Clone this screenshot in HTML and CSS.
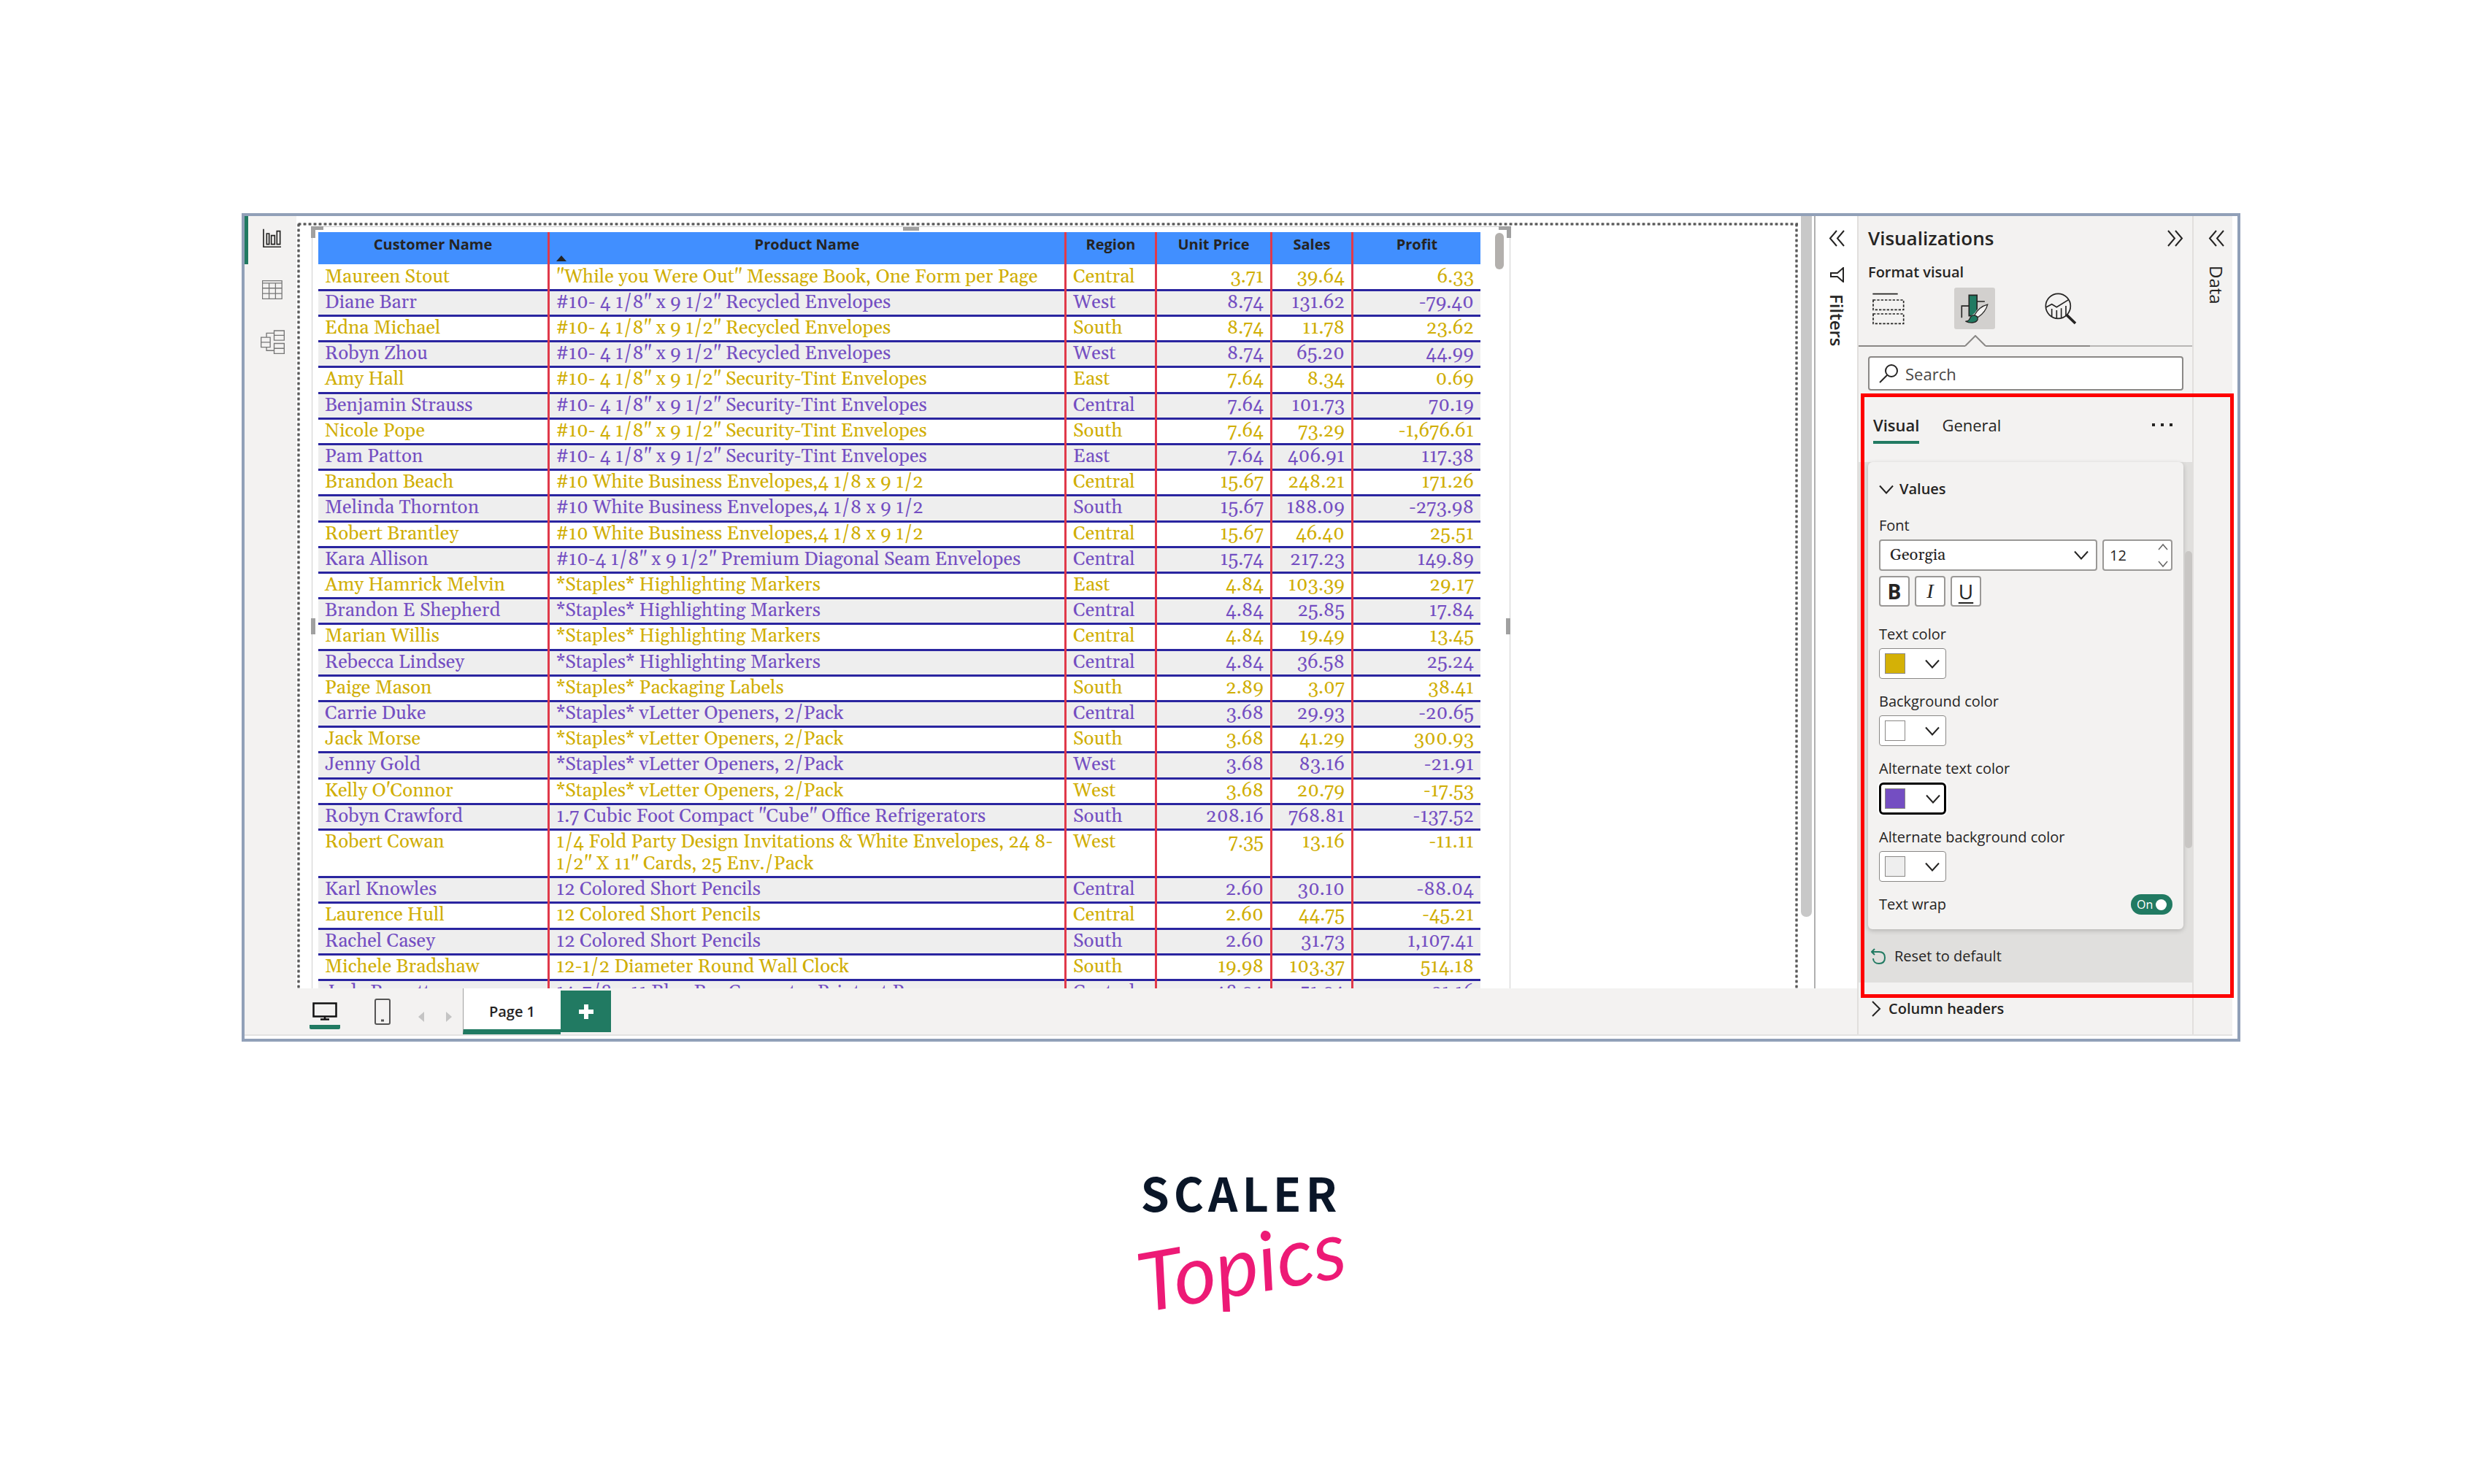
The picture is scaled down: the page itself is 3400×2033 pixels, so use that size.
FILE: index.html
```html
<!DOCTYPE html>
<html lang="en">
<head>
<meta charset="utf-8">
<title>Table visual formatting</title>
<link rel="stylesheet" href="styles.css">
</head>
<body>
<svg class="defs" aria-hidden="true">
  <symbol id="chev-down" viewBox="0 0 20 13"><path d="M1 1.500l9 10 9-10" fill="none" stroke="#252423" stroke-width="2"/></symbol>
  <symbol id="dbl-left" viewBox="0 0 22 23"><path d="M11 1L2 11.500 11 22M21 1l-9 10.500L21 22" fill="none" stroke="#252423" stroke-width="2"/></symbol>
</svg>
<main class="frame">
  <div class="workspace">
    <div class="editor">
      <nav class="views" aria-label="Views">
        <button class="view active" aria-label="Report view"><svg width="26" height="26" viewBox="72 69 78 78"><path d="M75 71v74h72M88 90h10v44H88zM107 98h14v36h-14zM130 80h13v54h-13z" fill="none" stroke="#252423" stroke-width="5"/></svg></button>
        <button class="view" aria-label="Table view"><svg width="28" height="26" viewBox="69 281 85 80"><path d="M70 283h82v76H70zM70 293h82M70 314h82M70 337h82M98 293v66M125 293v66" fill="none" stroke="#777" stroke-width="4"/></svg></button>
        <button class="view" aria-label="Model view"><svg width="33" height="33" viewBox="64 487 98 98"><path d="M119 490h41v39h-41zM119 509h41M66 517h37v40H66zM66 537h37M119 542h41v41h-41zM119 562h41M88 517v-17h31M88 557v14h31" fill="none" stroke="#777" stroke-width="4"/></svg></button>
      </nav>
      <section class="canvas">
        <div class="page">
          <div class="visual">
            <i class="grip tl"></i><i class="grip tc"></i><i class="grip tr"></i><i class="grip ml"></i><i class="grip mr"></i>
            <table>
              <colgroup><col class="c-name"><col class="c-product"><col class="c-region"><col class="c-price"><col class="c-sales"><col class="c-profit"></colgroup>
              <thead><tr><th>Customer Name</th><th class="sorted">Product Name</th><th>Region</th><th>Unit Price</th><th>Sales</th><th>Profit</th></tr></thead>
              <tbody>
                <tr><td>Maureen Stout</td><td>"While you Were Out" Message Book, One Form per Page</td><td>Central</td><td>3.71</td><td>39.64</td><td>6.33</td></tr>
                <tr><td>Diane Barr</td><td>#10- 4 1/8" x 9 1/2" Recycled Envelopes</td><td>West</td><td>8.74</td><td>131.62</td><td>-79.40</td></tr>
                <tr><td>Edna Michael</td><td>#10- 4 1/8" x 9 1/2" Recycled Envelopes</td><td>South</td><td>8.74</td><td>11.78</td><td>23.62</td></tr>
                <tr><td>Robyn Zhou</td><td>#10- 4 1/8" x 9 1/2" Recycled Envelopes</td><td>West</td><td>8.74</td><td>65.20</td><td>44.99</td></tr>
                <tr><td>Amy Hall</td><td>#10- 4 1/8" x 9 1/2" Security-Tint Envelopes</td><td>East</td><td>7.64</td><td>8.34</td><td>0.69</td></tr>
                <tr><td>Benjamin Strauss</td><td>#10- 4 1/8" x 9 1/2" Security-Tint Envelopes</td><td>Central</td><td>7.64</td><td>101.73</td><td>70.19</td></tr>
                <tr><td>Nicole Pope</td><td>#10- 4 1/8" x 9 1/2" Security-Tint Envelopes</td><td>South</td><td>7.64</td><td>73.29</td><td>-1,676.61</td></tr>
                <tr><td>Pam Patton</td><td>#10- 4 1/8" x 9 1/2" Security-Tint Envelopes</td><td>East</td><td>7.64</td><td>406.91</td><td>117.38</td></tr>
                <tr><td>Brandon Beach</td><td>#10 White Business Envelopes,4 1/8 x 9 1/2</td><td>Central</td><td>15.67</td><td>248.21</td><td>171.26</td></tr>
                <tr><td>Melinda Thornton</td><td>#10 White Business Envelopes,4 1/8 x 9 1/2</td><td>South</td><td>15.67</td><td>188.09</td><td>-273.98</td></tr>
                <tr><td>Robert Brantley</td><td>#10 White Business Envelopes,4 1/8 x 9 1/2</td><td>Central</td><td>15.67</td><td>46.40</td><td>25.51</td></tr>
                <tr><td>Kara Allison</td><td>#10-4 1/8" x 9 1/2" Premium Diagonal Seam Envelopes</td><td>Central</td><td>15.74</td><td>217.23</td><td>149.89</td></tr>
                <tr><td>Amy Hamrick Melvin</td><td>*Staples* Highlighting Markers</td><td>East</td><td>4.84</td><td>103.39</td><td>29.17</td></tr>
                <tr><td>Brandon E Shepherd</td><td>*Staples* Highlighting Markers</td><td>Central</td><td>4.84</td><td>25.85</td><td>17.84</td></tr>
                <tr><td>Marian Willis</td><td>*Staples* Highlighting Markers</td><td>Central</td><td>4.84</td><td>19.49</td><td>13.45</td></tr>
                <tr><td>Rebecca Lindsey</td><td>*Staples* Highlighting Markers</td><td>Central</td><td>4.84</td><td>36.58</td><td>25.24</td></tr>
                <tr><td>Paige Mason</td><td>*Staples* Packaging Labels</td><td>South</td><td>2.89</td><td>3.07</td><td>38.41</td></tr>
                <tr><td>Carrie Duke</td><td>*Staples* vLetter Openers, 2/Pack</td><td>Central</td><td>3.68</td><td>29.93</td><td>-20.65</td></tr>
                <tr><td>Jack Morse</td><td>*Staples* vLetter Openers, 2/Pack</td><td>South</td><td>3.68</td><td>41.29</td><td>300.93</td></tr>
                <tr><td>Jenny Gold</td><td>*Staples* vLetter Openers, 2/Pack</td><td>West</td><td>3.68</td><td>83.16</td><td>-21.91</td></tr>
                <tr><td>Kelly O'Connor</td><td>*Staples* vLetter Openers, 2/Pack</td><td>West</td><td>3.68</td><td>20.79</td><td>-17.53</td></tr>
                <tr><td>Robyn Crawford</td><td>1.7 Cubic Foot Compact "Cube" Office Refrigerators</td><td>South</td><td>208.16</td><td>768.81</td><td>-137.52</td></tr>
                <tr><td>Robert Cowan</td><td>1/4 Fold Party Design Invitations &amp; White Envelopes, 24 8-1/2" X 11" Cards, 25 Env./Pack</td><td>West</td><td>7.35</td><td>13.16</td><td>-11.11</td></tr>
                <tr><td>Karl Knowles</td><td>12 Colored Short Pencils</td><td>Central</td><td>2.60</td><td>30.10</td><td>-88.04</td></tr>
                <tr><td>Laurence Hull</td><td>12 Colored Short Pencils</td><td>Central</td><td>2.60</td><td>44.75</td><td>-45.21</td></tr>
                <tr><td>Rachel Casey</td><td>12 Colored Short Pencils</td><td>South</td><td>2.60</td><td>31.73</td><td>1,107.41</td></tr>
                <tr><td>Michele Bradshaw</td><td>12-1/2 Diameter Round Wall Clock</td><td>South</td><td>19.98</td><td>103.37</td><td>514.18</td></tr>
                <tr><td>Judy Barrett</td><td>14-7/8 x 11 Blue Bar Computer Printout Paper</td><td>Central</td><td>48.94</td><td>51.94</td><td>31.16</td></tr>
              </tbody>
            </table>
            <i class="table-thumb"></i>
          </div>
        </div>
        <div class="canvas-scroll"><i></i></div>
      </section>
      <aside class="rail filters">
        <button class="icon-btn" aria-label="Expand filters"><svg width="22" height="23"><use href="#dbl-left"/></svg></button>
        <svg class="funnel" width="20" height="21" viewBox="0 0 20 21"><path d="M19 1v19l-8-7H2V8h9z" fill="none" stroke="#252423" stroke-width="2"/></svg>
        <span class="rail-label">Filters</span>
      </aside>
      <footer class="pages">
        <button class="layout active" aria-label="Desktop layout"><svg width="34" height="27" viewBox="0 0 34 27"><path d="M1.500 3.500h31v18h-31zM17 21v4M11 25.500h12" fill="none" stroke="#111" stroke-width="2.500"/></svg></button>
        <button class="layout phone" aria-label="Mobile layout"><svg width="22" height="36" viewBox="0 0 22 36"><rect x="1" y="1" width="20" height="34" rx="2" fill="none" stroke="#555" stroke-width="2"/><path d="M9 30h4" stroke="#555" stroke-width="3"/></svg></button>
        <button class="step" aria-label="Previous page"><svg width="8" height="14"><path d="M8 0v14L0 7z" fill="#c4c4c4"/></svg></button>
        <button class="step" aria-label="Next page"><svg width="8" height="14"><path d="M0 0v14l8-7z" fill="#c4c4c4"/></svg></button>
        <button class="page-tab">Page 1</button>
        <button class="add" aria-label="New page"><svg width="20" height="20"><path d="M10 0v20M0 10h20" stroke="#fff" stroke-width="6"/></svg></button>
      </footer>
    </div>

    <aside class="viz">
      <header class="viz-head"><h1>Visualizations</h1><button class="icon-btn" aria-label="Collapse"><svg class="flip" width="22" height="23"><use href="#dbl-left"/></svg></button></header>
      <h2>Format visual</h2>
      <div class="modes">
        <button class="mode" aria-label="Build visual"><svg width="44" height="44" viewBox="78 60 132 132"><g fill="none" stroke="#252423" stroke-width="5"><path d="M79 65h103"/><path d="M81 90h125v40H81zM81 147h125v40H81z" stroke-dasharray="10 6"/></g></svg></button>
        <button class="mode active" aria-label="Format visual"><svg width="38" height="42" viewBox="442 66 118 124"><path d="M477 70h34v88h-34z" fill="#217a62" stroke="#252423" stroke-width="5"/><path d="M446 166v-50h31M513 97h31" fill="none" stroke="#252423" stroke-width="5"/><path d="M550 114c-16 8-32 24-42 40l-16 12" fill="none" stroke="#d2d0ce" stroke-width="20"/><path d="M500 156c12-22 32-40 56-46-6 24-20 40-40 54z" fill="#f3f2f1" stroke="#252423" stroke-width="4"/><path d="M462 181c12 0 16-4 20-15 6-12 20-14 28-5 10 12 0 25-18 26-12 1-20-1-30-6z" fill="#217a62" stroke="#252423" stroke-width="4"/></svg></button>
        <button class="mode" aria-label="Analytics"><svg width="44" height="44" viewBox="782 60 132 132"><g fill="none" stroke="#252423" stroke-width="5"><circle cx="837" cy="115" r="51"/><path d="M787 120l24-13 20 12 50-31M811 126v34M831 132v34M850 124v40M869 114v42"/><path d="M872 151l36 35" stroke-width="11"/></g></svg></button>
      </div>
      <div class="notch-line" aria-hidden="true"><i class="seg before"></i><svg width="28" height="16"><path d="M0 15L14 1l14 14" fill="none" stroke="#8a8886" stroke-width="2"/></svg><i class="seg mid"></i><i class="seg after"></i></div>
      <label class="search"><svg width="26" height="26" viewBox="0 0 26 26"><circle cx="17" cy="9" r="8" fill="none" stroke="#252423" stroke-width="2"/><path d="M11 15L1 25" stroke="#252423" stroke-width="2"/></svg><input type="search" placeholder="Search" aria-label="Search"></label>
      <div class="tabs"><button class="tab active">Visual</button><button class="tab">General</button><button class="more" aria-label="More options"><svg width="28" height="4"><path d="M0 0h4v4H0zM12 0h4v4h-4zM24 0h4v4h-4z" fill="#252423"/></svg></button></div>
      <div class="groups">
        <section class="card">
          <h3><svg width="20" height="13"><use href="#chev-down"/></svg>Values</h3>
          <div class="field">
            <label for="font">Font</label>
            <div class="font-row">
              <div class="select"><select id="font"><option>Georgia</option></select><svg width="20" height="13"><use href="#chev-down"/></svg></div>
              <div class="number"><input type="number" value="12" aria-label="Font size"><svg width="14" height="34" viewBox="0 0 14 34"><path d="M1 9l6-7 6 7M1 25l6 7 6-7" fill="none" stroke="#666" stroke-width="1.500"/></svg></div>
            </div>
            <div class="styles"><button class="b">B</button><button class="i">I</button><button class="u">U</button></div>
          </div>
          <div class="field"><label for="c1">Text color</label><button class="color" id="c1"><i class="swatch gold"></i><svg width="20" height="13"><use href="#chev-down"/></svg></button></div>
          <div class="field"><label for="c2">Background color</label><button class="color" id="c2"><i class="swatch white"></i><svg width="20" height="13"><use href="#chev-down"/></svg></button></div>
          <div class="field"><label for="c3">Alternate text color</label><button class="color focused" id="c3"><i class="swatch purple"></i><svg width="20" height="13"><use href="#chev-down"/></svg></button></div>
          <div class="field"><label for="c4">Alternate background color</label><button class="color" id="c4"><i class="swatch gray"></i><svg width="20" height="13"><use href="#chev-down"/></svg></button></div>
          <div class="wrap-row"><label for="wrap">Text wrap</label><label class="toggle">On<input type="checkbox" id="wrap" checked></label></div>
        </section>
        <button class="reset"><svg width="20" height="22" viewBox="0 0 20 22"><path d="M5 1L1 5l4 4M1 5h10c5 0 8 3 8 8s-3 8-8 8-8-3-8-7" fill="none" stroke="#217a62" stroke-width="2"/></svg>Reset to default</button>
        <i class="thumb"></i>
      </div>
      <button class="group-head"><svg width="13" height="22"><path d="M1 1l10 10L1 21" fill="none" stroke="#252423" stroke-width="2"/></svg>Column headers</button>
      <div class="callout"></div>
    </aside>

    <aside class="rail data">
      <button class="icon-btn" aria-label="Expand data"><svg width="22" height="23"><use href="#dbl-left"/></svg></button>
      <span class="rail-label">Data</span>
    </aside>
  </div>
</main>
<div class="brand"><span class="brand-name">SCALER</span><span class="brand-sub">Topics</span></div>
</body>
</html>
```
FILE: styles.css
```css
* { box-sizing: border-box; }
body {
  margin: 0;
  padding: 292px 331px 0;
  background: #fff;
  color: #252423;
  font: 20px/30px "Open Sans", "Noto Sans", sans-serif;
}
button, input, select { margin: 0; padding: 0; border: 0; background: none; color: inherit; font: inherit; }
h1, h2, h3 { margin: 0; font-weight: 600; }
svg { display: block; flex: none; }
i { display: block; }
.defs { position: absolute; width: 0; height: 0; }

.frame { border: 4px solid #91a0b8; padding: 0 7px 4px 0; }
.workspace { display: flex; border-bottom: 2px solid #e3e2e1; background: #f3f2f1; }
.editor { flex: 1; min-width: 0; display: grid; grid-template: minmax(0, 1fr) 63px / 71px minmax(0, 1fr) 59px; }

/* view switcher */
.views { display: flex; flex-direction: column; gap: 5px; }
.view { height: 66px; padding-bottom: 6px; display: grid; place-items: center; border-left: 5px solid transparent; }
.view.active { border-color: #217a62; }

/* report canvas */
.canvas { display: flex; contain: size; overflow: hidden; background: #fff; }
.page {
  flex: 1; min-width: 0; margin: 9px 4px 0 1px; padding: 5px 20px 0; overflow: hidden;
  background:
    radial-gradient(circle, #555 0 1px, transparent 3px) left top / 7px 4px repeat-x,
    radial-gradient(circle, #555 0 1px, transparent 3px) left top / 4px 7px repeat-y,
    radial-gradient(circle, #555 0 1px, transparent 3px) right top / 4px 7px repeat-y;
}
.visual { position: relative; width: 1642px; max-width: 100%; padding: 7px 40px 0 8px; border: 1px solid #d0d0d0; }
.grip { position: absolute; background: #a0a0a0; }
.tl, .tr { width: 17px; height: 16px; top: -1px; background: none; border-top: 5px solid #a0a0a0; }
.tl { left: -2px; border-left: 6px solid #a0a0a0; }
.tr { right: -2px; border-right: 6px solid #a0a0a0; }
.tc { top: 0; left: 50%; width: 22px; height: 5px; margin-left: -11px; }
.ml, .mr { top: 536px; width: 6px; height: 22px; }
.ml { left: -2px; }
.mr { right: -1px; }
.table-thumb { position: absolute; top: 8px; right: 8px; width: 12px; height: 50px; border-radius: 6px; background: #b3b0ad; }
.canvas-scroll { width: 18px; }
.canvas-scroll i { width: 15px; height: 960px; background: #c8c8c8; border-radius: 0 0 7px 7px; }

table { width: 100%; table-layout: fixed; border-spacing: 0; font: 26px/30px Gelasio, Georgia, serif; }
.c-name { width: 317px; }
.c-region { width: 124px; }
.c-price { width: 158px; }
.c-sales { width: 111px; }
.c-profit { width: 174px; }
th { position: relative; height: 44px; padding: 0 0 10px; background: #418fff; font: 700 20px/30px "Open Sans", "Noto Sans", sans-serif; }
th, td { border-right: 3px solid #e0394a; }
th:last-child, td:last-child { border-right: 0; }
.sorted::after { content: ""; position: absolute; left: 9px; bottom: 4px; border: 7px solid transparent; border-top: 0; border-bottom: 8px solid #252423; }
td { padding: 1px 9px 4px; vertical-align: top; color: #d0ae04; box-shadow: inset 0 -3px #2a25a0; }
tr:nth-child(5n) td { padding-bottom: 5px; }
tbody tr:first-child td { padding-top: 3px; }
tbody tr:nth-child(even) td { color: #744ec2; background: #eee; }
td:nth-child(n+4) { text-align: right; }

/* collapsed panes */
.rail { display: flex; flex-direction: column; align-items: center; padding-top: 19px; }
.filters { background: #fff; border-left: 2px solid #b0b0b0; }
.icon-btn { display: block; }
.rail-label { writing-mode: vertical-rl; font-size: 24px; font-weight: 600; line-height: 30px; }
.funnel { margin: 28px 0 16px; }
.data { width: 53px; padding-left: 8px; }
.data .rail-label { margin-top: 26px; font-weight: 400; }

/* page tabs */
.pages { grid-column: 1 / -1; display: flex; padding-left: 89px; }
.layout { width: 42px; height: 56px; padding: 11px 4px 0; }
.layout.active { border-bottom: 6px solid #217a62; border-radius: 2px; }
.phone { margin: 0 13px 0 37px; padding: 8px 10px 0; }
.step { width: 38px; padding: 14px 15px 0; }
.page-tab { width: 134px; padding-top: 8px; background: #fff; border-left: 1px solid #a0a0a0; border-bottom: 7px solid #217a62; font-weight: 600; }
.add { display: grid; place-items: center; width: 69px; height: 57px; margin: 3px 0; background: #217a62; }

/* visualizations pane */
.viz { position: relative; width: 461px; display: flex; flex-direction: column; border-left: 2px solid #e1dfdd; border-right: 2px solid #e1dfdd; }
.viz-head { display: flex; align-items: center; justify-content: space-between; height: 60px; padding: 0 12px 0 13px; }
h1 { font-size: 26px; }
.flip { transform: scaleX(-1); }
h2 { padding: 2px 13px; font-size: 20px; }
.modes { display: flex; gap: 62px; padding: 4px 0 0 13px; }
.mode { display: grid; place-items: center; width: 56px; height: 57px; border-radius: 3px; }
.mode.active { background: #d2d0ce; }
.notch-line { display: flex; align-items: flex-end; height: 24px; }
.seg { height: 2px; background: #8a8886; }
.before { width: 146px; }
.mid { flex: 1; }
.after { width: 140px; background: #b8b6b4; }
.search { display: flex; align-items: center; gap: 10px; height: 47px; margin: 13px 12px 0 13px; padding: 0 13px; border: 2px solid #8a8886; border-radius: 4px; background: #fff; }
.search input { flex: 1; min-width: 0; outline: 0; font-size: 22px; }
.search input::placeholder { color: #484644; opacity: 1; }
.tabs { display: flex; gap: 31px; padding: 31px 27px 25px 20px; font-size: 22px; }
.tab { height: 42px; padding-bottom: 6px; line-height: 32px; border-bottom: 4px solid transparent; }
.tab.active { border-color: #217a62; font-weight: 600; }
.more { margin-left: auto; height: 32px; }
.groups { position: relative; background: #e0dfdd; }
.card { margin: 0 12px 0 13px; padding: 22px 15px 19px; display: grid; gap: 16px; border-radius: 6px; background: #f3f2f1; box-shadow: 0 2px 6px #0003; }
h3 { display: flex; align-items: center; gap: 8px; margin-bottom: 4px; font-size: 20px; }
.field { display: grid; gap: 4px; justify-items: start; }
.font-row { display: flex; gap: 7px; width: 100%; }
.select, .number { display: grid; align-items: center; height: 43px; border: 2px solid #9a9896; border-radius: 4px; background: #fff; }
.select > *, .number > * { grid-area: 1 / 1; }
.select { flex: 1; }
.select select { appearance: none; height: 100%; padding-left: 13px; font: 22px/30px Gelasio, Georgia, serif; }
.select svg { justify-self: end; margin-right: 10px; pointer-events: none; }
.number { width: 96px; }
.number input { width: 100%; height: 100%; padding-left: 8px; appearance: textfield; }
.number svg { justify-self: end; margin-right: 4px; pointer-events: none; }
.styles { display: flex; gap: 7px; margin: 3px 0 7px; }
.styles button { width: 42px; height: 42px; border: 2px solid #9a9896; border-radius: 4px; background: #fff; font-size: 28px; line-height: 34px; }
.b { font-weight: 700; }
.styles .i { font-family: "Liberation Serif", serif; font-style: italic; }
.u { text-decoration: underline; text-decoration-thickness: 2px; text-underline-offset: 4px; }
.color { display: flex; align-items: center; justify-content: space-between; width: 92px; height: 42px; padding: 0 8px 0 7px; border: 1px solid #8a8886; border-radius: 4px; background: #fff; }
.color.focused { height: 44px; padding: 0 5px; border: 3px solid #000; border-radius: 6px; box-shadow: 0 0 0 2px #fff; }
.swatch { width: 28px; height: 28px; border: 1px solid #8a8886; }
.gold { background: #d4b106; }
.white { background: #fff; }
.purple { background: #744ec2; }
.gray { background: #eee; }
.wrap-row { display: flex; align-items: center; justify-content: space-between; height: 30px; }
.toggle { display: flex; align-items: center; justify-content: space-between; width: 57px; height: 28px; padding: 0 8px; border-radius: 14px; background: #217a62; color: #fff; font-size: 16px; line-height: 28px; }
.toggle input { appearance: none; width: 15px; height: 15px; border-radius: 50%; background: #fff; }
.reset { display: flex; align-items: center; gap: 12px; width: 100%; height: 73px; padding-left: 17px; }
.thumb { position: absolute; right: 0; top: 122px; width: 10px; height: 407px; border-radius: 5px; background: #c8c6c4; }
.group-head { display: flex; align-items: center; gap: 10px; height: 71px; padding-left: 18px; font-weight: 600; }
.callout { position: absolute; inset: 243px -57px 50px 3px; border: 5px solid #fe0000; pointer-events: none; }

/* brand mark */
.brand { display: flex; flex-direction: column; align-items: center; padding: 174px 0 0; }
.brand-name { color: #0a1628; font: 700 63px/64px "Noto Sans CJK SC", sans-serif; letter-spacing: 6px; }
.brand-sub { color: #ed1a76; font: italic 112px/132px Lato, sans-serif; transform: rotate(-10deg); }
```
